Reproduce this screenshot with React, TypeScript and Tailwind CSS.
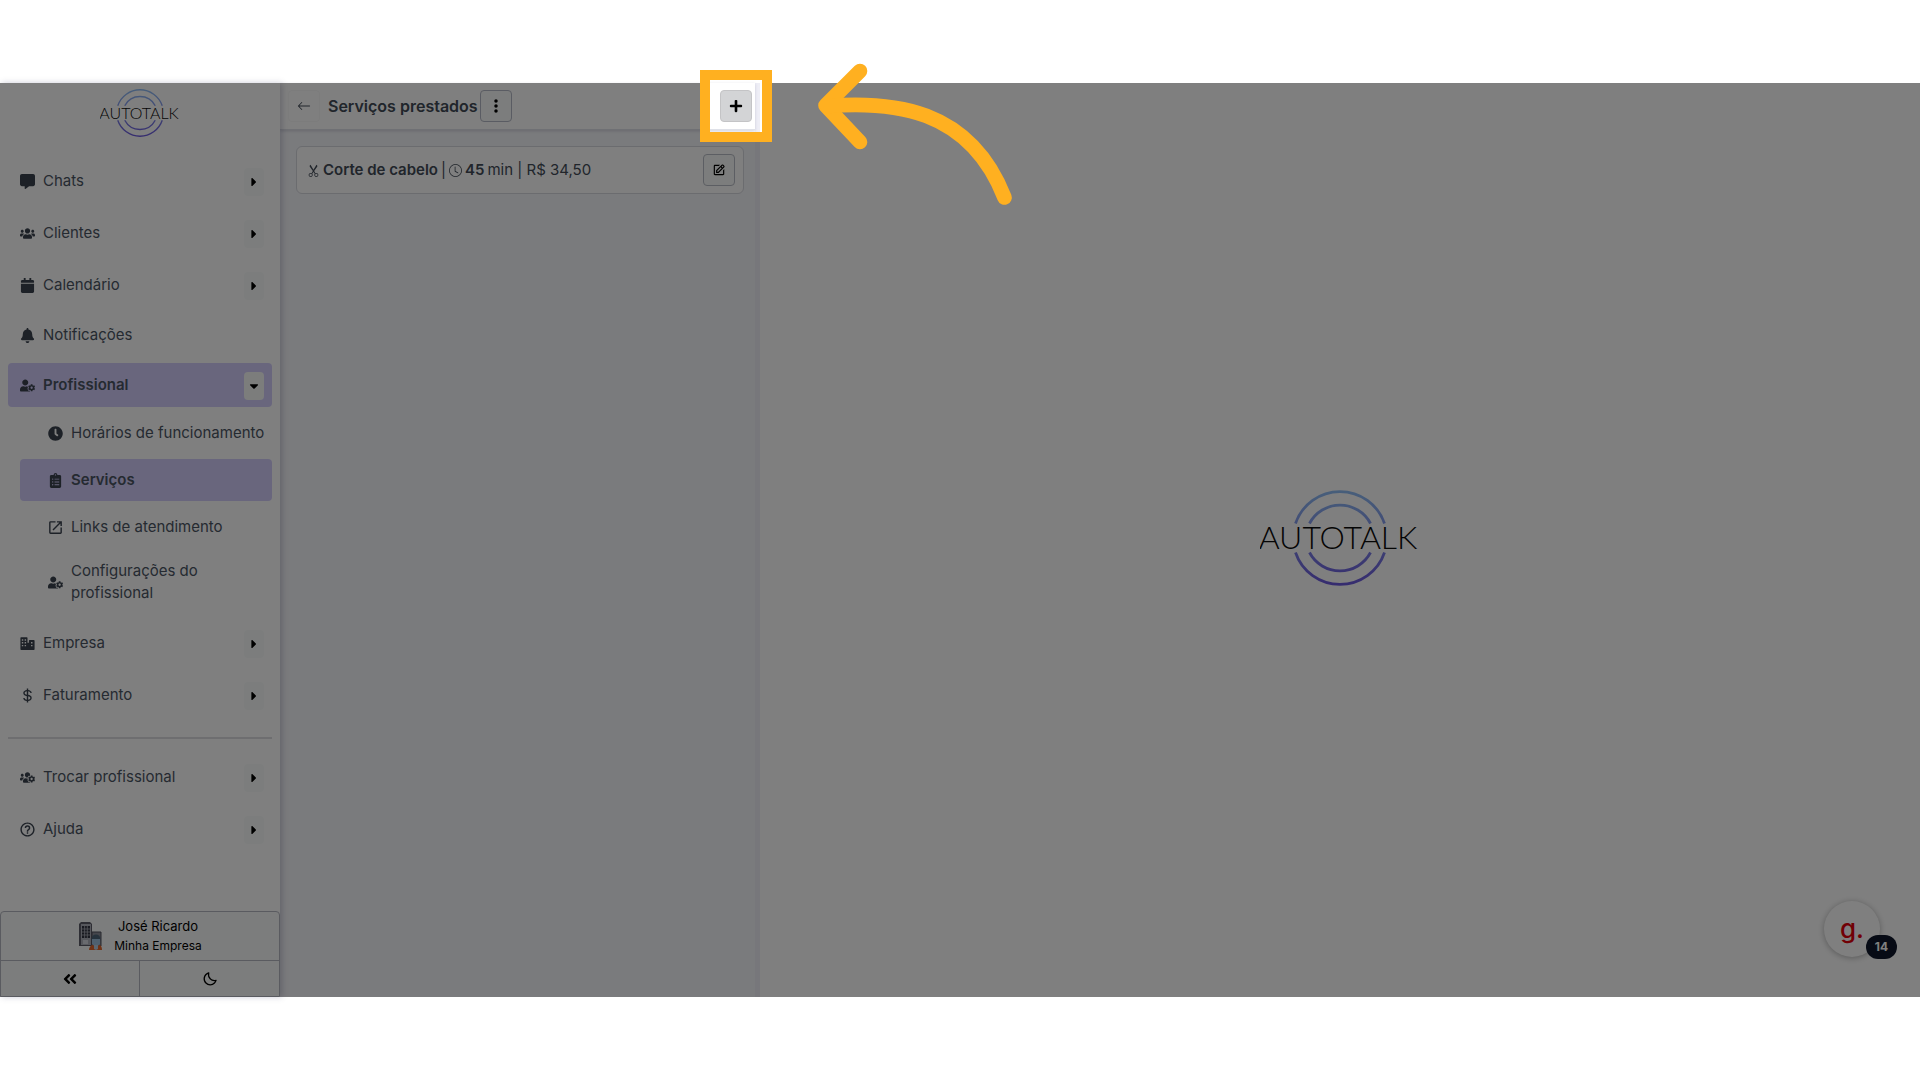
import React from 'react';
import { BiDollar, BiEdit, BiHelpCircle, BiMoon, BiSolidBusiness } from 'react-icons/bi';
import { BsArrowLeft, BsClock, BsScissors } from 'react-icons/bs';
import {
  FaAngleDoubleLeft,
  FaBell,
  FaCalendar,
  FaCaretDown,
  FaCaretRight,
  FaClipboardList,
  FaClock,
  FaPlus,
  FaUserCog,
  FaUsers,
  FaUsersCog,
} from 'react-icons/fa';
import { FaEllipsisVertical, FaMessage } from 'react-icons/fa6';
import { MdOpenInNew } from 'react-icons/md';
import { IconType } from 'react-icons';

interface MenuItem {
  label: string;
  icon: IconType;
  large?: boolean;
  expandable?: boolean;
  active?: boolean;
  children?: MenuItem[];
}

const MAIN_MENU: MenuItem[] = [
  { label: 'Chats', icon: FaMessage, expandable: true },
  { label: 'Clientes', icon: FaUsers, expandable: true },
  { label: 'Calendário', icon: FaCalendar, expandable: true },
  { label: 'Notificações', icon: FaBell },
  {
    label: 'Profissional',
    icon: FaUserCog,
    expandable: true,
    active: true,
    children: [
      { label: 'Horários de funcionamento', icon: FaClock },
      { label: 'Serviços', icon: FaClipboardList, active: true },
      { label: 'Links de atendimento', icon: MdOpenInNew, large: true },
      { label: 'Configurações do profissional', icon: FaUserCog },
    ],
  },
  { label: 'Empresa', icon: BiSolidBusiness, large: true, expandable: true },
  { label: 'Faturamento', icon: BiDollar, large: true, expandable: true },
];

const FOOTER_MENU: MenuItem[] = [
  { label: 'Trocar profissional', icon: FaUsersCog, expandable: true },
  { label: 'Ajuda', icon: BiHelpCircle, large: true, expandable: true },
];

const Logo: React.FC<{ className: string; id: string }> = ({ className, id }) => (
  <svg viewBox="0 0 160 100" className={className} role="img" aria-label="Autotalk">
    <defs>
      <linearGradient id={id} x1="0" y1="2" x2="0" y2="98" gradientUnits="userSpaceOnUse">
        <stop offset="0" stopColor="#8fbcf5" />
        <stop offset="0.5" stopColor="#7f8ae8" />
        <stop offset="1" stopColor="#6a55dd" />
      </linearGradient>
    </defs>
    <g fill="none" stroke={`url(#${id})`} strokeWidth="2.8">
      <path d="M35.500 33.500A47 47 0 0 1 124.500 33.500" />
      <path d="M49.500 33.500A34.500 34.500 0 0 1 110.500 33.500" />
      <path d="M35.500 62.500A47 47 0 0 0 124.500 62.500" />
      <path d="M49.500 62.500A34.500 34.500 0 0 0 110.500 62.500" />
    </g>
    <text x="78" y="59" textAnchor="middle" fontSize="32" fontWeight="300" fill="#0a0a0a" fontFamily="Lato, sans-serif">
      AUTOTALK
    </text>
  </svg>
);

const CompanyIcon: React.FC = () => (
  <svg viewBox="0 0 24 30" className="h-[30px] w-6" aria-hidden="true">
    <path d="M1 3 3 1h9l2 2v22H1z" fill="#5c5c68" />
    <path d="M3 3h10v21H3z" fill="#aeb0ba" />
    <path d="M4 5h8v12H4z" fill="#333542" />
    <path d="M4 8h8M4 11h8M4 14h8M6.600 5v12M9.300 5v12" stroke="#aeb0ba" strokeWidth="0.8" />
    <path d="M14 11h9v14h-9z" fill="#8b8d98" stroke="#50525e" />
    <path d="M5 19h5v4H5z" fill="#d5d7df" />
    <circle cx="18" cy="18" r="4.500" fill="#4c6478" />
    <path d="M14 18h8v5l-4 4-4-4z" fill="#9cc0de" />
    <path d="M11 29c0-3 2-5 4-5l3 3 3-3c2 0 3 2 3 5z" fill="#e0662c" />
    <path d="M16 24h4v4l-2 1-2-1z" fill="#b8cfe2" />
  </svg>
);

const MenuRow: React.FC<{ item: MenuItem; nested?: boolean }> = ({ item, nested }) => {
  const Icon = item.icon;
  const Caret = item.active ? FaCaretDown : FaCaretRight;
  let size = 'h-10 px-3';
  if (item.expandable) size = 'h-11 pl-3 pr-2';
  if (nested) size = item.active ? 'ml-3 h-[42px] pl-7' : 'ml-3 min-h-9 py-[7px] pl-7';

  return (
    <div className={`flex items-center rounded ${size} ${item.active ? 'bg-[#d3cdfb] font-semibold' : ''}`}>
      <a href="#" className="flex flex-1 items-center gap-2 leading-[22px]">
        <span className="flex w-[15px] shrink-0 justify-center text-[#3a434f]">
          <Icon className={item.large ? 'size-[17px] shrink-0' : 'size-[15px] shrink-0'} />
        </span>
        <span>{item.label}</span>
      </a>
      {item.expandable && (
        <button
          aria-label={`Abrir ${item.label}`}
          className={`mt-0.5 flex h-7 w-5 items-center justify-center rounded text-black ${item.active ? 'bg-[#f8faf9]' : 'bg-[#f9fbfa]'}`}
        >
          <Caret className="size-3.5" />
        </button>
      )}
    </div>
  );
};

const Sidebar: React.FC = () => (
  <aside className="z-10 flex w-[280px] shrink-0 flex-col bg-white shadow-[2px_0_6px_rgba(60,60,100,0.25)]">
    <div className="flex h-[76px] justify-center pt-1.5">
      <Logo className="h-[50px] w-20" id="logo-small" />
    </div>
    <nav className="flex flex-1 flex-col gap-2 px-2 text-[15px] text-[#4b5563]">
      {MAIN_MENU.map((item) => (
        <React.Fragment key={item.label}>
          <MenuRow item={item} />
          {item.children && (
            <div className="flex flex-col gap-2 pb-0.5">
              {item.children.map((child) => (
                <MenuRow key={child.label} item={child} nested />
              ))}
            </div>
          )}
        </React.Fragment>
      ))}
      <hr className="my-2 mt-3 border-t-2 border-[#dcdde0]" />
      {FOOTER_MENU.map((item) => (
        <MenuRow key={item.label} item={item} />
      ))}
    </nav>
    <div className="rounded-t border border-[#b4b6c0] bg-[#f9fbfa] text-black">
      <button className="flex h-12 w-full items-center justify-center gap-3">
        <CompanyIcon />
        <span className="flex flex-col">
          <span className="text-[13px] leading-5">José Ricardo</span>
          <span className="text-[12px] leading-5">Minha Empresa</span>
        </span>
      </button>
      <div className="grid h-9 grid-cols-2 divide-x divide-[#b4b6c0] border-t border-[#b4b6c0]">
        <button aria-label="Recolher menu" className="flex items-center justify-center">
          <FaAngleDoubleLeft className="size-4" />
        </button>
        <button aria-label="Modo escuro" className="flex items-center justify-center">
          <BiMoon className="size-4" />
        </button>
      </div>
    </div>
  </aside>
);

const ServicesPanel: React.FC = () => (
  <section className="flex w-[480px] shrink-0 flex-col border-r-5 border-[#eeeef6] bg-[#f5f6fa] text-[#424b57]">
    <header className="flex h-[47px] items-center border-b border-[#dfe1e8] bg-white pr-[3px] pl-2 shadow-[0_1px_3px_rgba(60,60,100,0.2)]">
      <button aria-label="Voltar" className="flex size-8 items-center justify-center rounded border border-[#f9f9f9]">
        <BsArrowLeft className="size-3.5" />
      </button>
      <h1 className="mr-0.5 ml-2 text-[16px] font-semibold">Serviços prestados</h1>
      <button aria-label="Mais opções" className="flex size-8 items-center justify-center rounded border border-[#b4b8c6] bg-[#f9fbfa] text-black">
        <FaEllipsisVertical className="size-4" />
      </button>
      <button aria-label="Adicionar serviço" className="ml-auto flex size-8 items-center justify-center rounded border border-[#c4c4c6] bg-[#d3d4d6] text-black">
        <FaPlus className="size-3.5" />
      </button>
    </header>
    <div className="py-4 pr-[11px] pl-4">
      <article className="flex h-12 items-center justify-between rounded-md border border-[#d6d8df] bg-white pr-2 pl-2.5 text-[15px]">
        <p className="flex items-center gap-[3px]">
          <BsScissors className="size-[13px]" />
          <strong className="font-semibold">Corte de cabelo</strong>
          <span>|</span>
          <BsClock className="size-[13px]" />
          <strong className="font-semibold">45</strong>
          <span>min | R$ 34,50</span>
        </p>
        <button aria-label="Editar serviço" className="flex size-8 items-center justify-center rounded border border-[#b9bcc6] bg-[#f9fbfa] text-black">
          <BiEdit className="size-3.5" />
        </button>
      </article>
    </div>
  </section>
);

const App: React.FC = () => (
  <div className="flex h-screen min-h-[1000px] flex-col overflow-hidden bg-white py-[83px] font-[Inter,sans-serif]">
    <div className="relative flex flex-1">
      <Sidebar />
      <ServicesPanel />
      <main className="flex flex-1 items-center justify-center bg-white">
        <Logo className="h-[100px] w-40" id="logo-main" />
      </main>

      {/* Help launcher */}
      <button className="absolute right-10 bottom-10 flex size-14 items-center justify-center rounded-full bg-white text-[26px] leading-8 font-medium text-[#e3000b] shadow-[0_1px_6px_rgba(0,0,0,0.3)]">
        g.
        <span className="absolute -right-[17px] -bottom-0.5 flex h-6 w-[31px] items-center justify-center rounded-full bg-[#0f172a] text-[12px] font-bold text-white">14</span>
      </button>

      {/* Dimmed backdrop with a cutout over the add button */}
      <div className="pointer-events-none absolute inset-0 z-20 overflow-hidden">
        <div className="absolute -top-[3px] left-[710px] h-[52px] w-[52px] shadow-[0_0_0_4000px_rgba(0,0,0,0.5)]" />
      </div>
      <div className="pointer-events-none absolute -top-[13px] left-[700px] z-30 size-[72px] border-10 border-[#ffb020]" />
      <svg viewBox="0 0 200 150" className="pointer-events-none absolute -top-5 left-[815px] z-30 h-[150px] w-[200px]" aria-hidden="true">
        <g fill="none" stroke="#ffb020" strokeWidth="14.600" strokeLinecap="round" strokeLinejoin="round">
          <path d="M45 8 10.500 42.500 45 79" />
          <path d="M12 43C76 38 154 44 189.500 134.500" />
        </g>
      </svg>
    </div>
  </div>
);

export default App;
